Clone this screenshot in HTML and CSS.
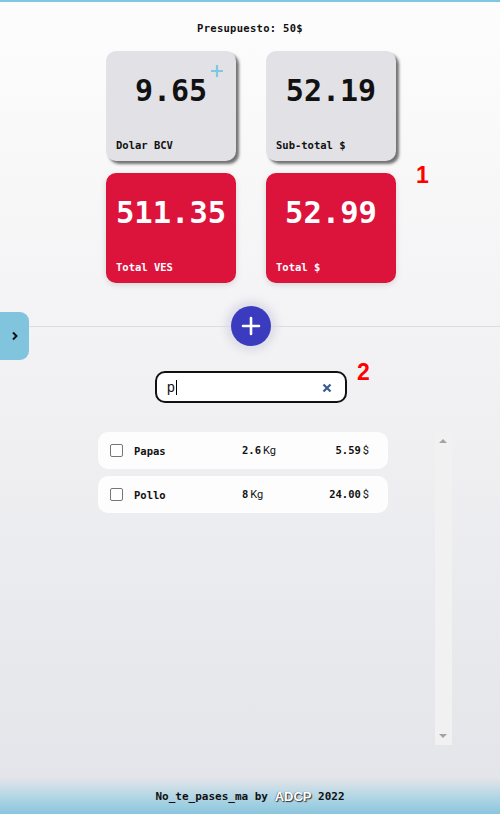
FILE: index.html
```html
<!DOCTYPE html>
<html lang="es">
<head>
<meta charset="utf-8">
<title>No_te_pases_ma</title>
<link rel="stylesheet" href="styles.css">
</head>
<body>
<div class="app">
  <header class="budget">Presupuesto: 50$</header>

  <section class="cards">
    <div class="card card-light">
      <span class="card-value">9.65</span>
      <span class="card-label">Dolar BCV</span>
      <svg class="card-plus" width="14" height="14" viewBox="0 0 14 14"><path d="M7 1v12M1 7h12" stroke="#7ec8e3" stroke-width="2.2" fill="none"/></svg>
    </div>
    <div class="card card-light">
      <span class="card-value">52.19</span>
      <span class="card-label">Sub-total $</span>
    </div>
    <div class="card card-red">
      <span class="card-value">511.35</span>
      <span class="card-label">Total VES</span>
    </div>
    <div class="card card-red">
      <span class="card-value">52.99</span>
      <span class="card-label">Total $</span>
    </div>
    <span class="marker marker-1">1</span>
  </section>

  <div class="divider">
    <button class="add-btn" type="button" aria-label="Agregar">
      <svg width="20" height="20" viewBox="0 0 20 20"><path d="M10 2v16M2 10h16" stroke="#fff" stroke-width="2.6" fill="none" stroke-linecap="round"/></svg>
    </button>
  </div>

  <div class="side-tab">
    <svg width="8" height="10" viewBox="0 0 8 10"><path d="M2 1.5L5.5 5L2 8.5" stroke="#111" stroke-width="2" fill="none"/></svg>
  </div>

  <div class="search-row">
    <div class="search">
      <span class="search-text">p</span><span class="caret"></span>
      <svg class="search-clear" width="10" height="10" viewBox="0 0 10 10"><path d="M1.5 1.5L8.5 8.5M8.5 1.5L1.5 8.5" stroke="#3a5a92" stroke-width="2.2" fill="none"/></svg>
      <span class="marker marker-2">2</span>
    </div>
  </div>

  <div class="list-area">
    <ul class="items">
      <li class="item">
        <span class="check"></span>
        <span class="item-name">Papas</span>
        <span class="item-qty">2.6<span class="unit">Kg</span></span>
        <span class="item-price">5.59<span class="unit">$</span></span>
      </li>
      <li class="item">
        <span class="check"></span>
        <span class="item-name">Pollo</span>
        <span class="item-qty">8<span class="unit">Kg</span></span>
        <span class="item-price">24.00<span class="unit">$</span></span>
      </li>
    </ul>
    <div class="scrollbar">
      <span class="arrow arrow-up"></span>
      <span class="arrow arrow-down"></span>
    </div>
  </div>

  <footer class="footer">No_te_pases_ma by <span class="brand">ADCP</span> 2022</footer>
</div>
</body>
</html>
```

FILE: styles.css
```css
* { box-sizing: border-box; }

html, body {
  margin: 0;
  padding: 0;
}

body {
  width: 500px;
  height: 814px;
  overflow: hidden;
  font-family: "DejaVu Sans Mono", "Liberation Mono", monospace;
  color: #111;
}

.app {
  position: relative;
  height: 814px;
  display: flex;
  flex-direction: column;
  border-top: 2px solid #7ec8e3;
  background: linear-gradient(180deg, #fdfdfd 0%, #f3f3f5 40%, #e3e4e9 100%);
}

.budget {
  margin-top: 19px;
  height: 14px;
  line-height: 14px;
  text-align: center;
  font-size: 10.5px;
  font-weight: bold;
  letter-spacing: 0.3px;
}

.cards {
  position: relative;
  align-self: center;
  margin-top: 16px;
  margin-left: 2px;
  display: grid;
  grid-template-columns: 130px 130px;
  grid-auto-rows: 110px;
  column-gap: 30px;
  row-gap: 12px;
}

.card {
  position: relative;
  border-radius: 10px;
  display: flex;
  flex-direction: column;
  justify-content: space-between;
  padding: 22px 10px 9px 10px;
}

.card-light {
  background: #e1e1e6;
  box-shadow: 3px 3px 3px rgba(0, 0, 0, 0.55);
}

.card-red {
  background: #dc143c;
  color: #fff;
  box-shadow: 0 2px 6px rgba(0, 0, 0, 0.12);
}

.card-value {
  display: block;
  text-align: center;
  font-size: 30px;
  line-height: 36px;
  font-weight: bold;
}

.card-red .card-value {
  font-size: 30.5px;
}

.card-label {
  display: block;
  font-size: 10.5px;
  line-height: 14px;
  font-weight: bold;
}

.card-plus {
  position: absolute;
  top: 13px;
  left: 104px;
}

.marker {
  position: absolute;
  font-family: "Liberation Sans", Arial, sans-serif;
  font-weight: bold;
  color: #f00;
  font-size: 23px;
  line-height: 23px;
}

.marker-1 {
  left: 310px;
  top: 113px;
}

.divider {
  margin-top: 23px;
  height: 40px;
  display: flex;
  justify-content: center;
  align-items: center;
  background: linear-gradient(#dcdce1, #dcdce1) center / 100% 1px no-repeat;
}

.add-btn {
  width: 40px;
  height: 40px;
  margin-left: 2px;
  border: none;
  border-radius: 50%;
  background: #3b3bbf;
  display: flex;
  align-items: center;
  justify-content: center;
  padding: 0;
  box-shadow: 0 0 6px 6px rgba(215, 215, 228, 0.7);
}

.side-tab {
  position: absolute;
  left: 0;
  top: 310px;
  width: 29px;
  height: 48px;
  background: #80c4de;
  border-radius: 0 9px 9px 0;
  display: flex;
  align-items: center;
  justify-content: center;
  padding-left: 1px;
}

.search-row {
  margin-top: 25px;
  display: flex;
  justify-content: center;
}

.search {
  position: relative;
  margin-left: 2px;
  width: 192px;
  height: 32px;
  border: 2px solid #111;
  border-radius: 10px;
  background: #fff;
  display: flex;
  align-items: center;
  padding-left: 10px;
  font-family: "Liberation Sans", Arial, sans-serif;
  font-size: 14px;
}

.search-text {
  color: #111;
}

.caret {
  width: 1px;
  height: 15px;
  background: #000;
  margin-left: 1px;
}

.search-clear {
  position: absolute;
  right: 13px;
  top: 10px;
}

.marker-2 {
  left: 200px;
  top: -12px;
}

.list-area {
  margin-top: 29px;
  margin-left: 98px;
  width: 354px;
  height: 313px;
  display: flex;
  justify-content: space-between;
}

.items {
  list-style: none;
  margin: 0;
  padding: 0;
  width: 290px;
  display: flex;
  flex-direction: column;
  gap: 7px;
}

.item {
  height: 37px;
  border-radius: 10px;
  background: #fdfdfd;
  display: flex;
  align-items: center;
  padding: 0 19px 0 12px;
  font-size: 10.5px;
  font-weight: bold;
}

.check {
  width: 13px;
  height: 13px;
  border: 1.5px solid #767676;
  border-radius: 2px;
  background: #fff;
  flex: none;
}

.item-name {
  margin-left: 11px;
  width: 108px;
}

.item-qty {
  width: 70px;
}

.item-price {
  flex: 1;
  text-align: right;
}

.unit {
  font-family: "Roboto", "Liberation Sans", sans-serif;
  font-weight: normal;
  font-size: 11px;
  margin-left: 2px;
}

.scrollbar {
  position: relative;
  width: 17px;
  height: 313px;
  background: #f1f1f1;
}

.arrow {
  position: absolute;
  left: 4px;
  width: 0;
  height: 0;
  border-left: 4px solid transparent;
  border-right: 4px solid transparent;
}

.arrow-up {
  top: 7px;
  border-bottom: 4px solid #a3a3a3;
}

.arrow-down {
  bottom: 7px;
  border-top: 4px solid #a3a3a3;
}

.footer {
  margin-top: auto;
  height: 36px;
  display: flex;
  align-items: center;
  justify-content: center;
  white-space: pre;
  font-size: 11px;
  font-weight: bold;
  background: linear-gradient(180deg, #e3e4e9 0%, #b9d8e5 45%, #8ac6de 100%);
}

.brand {
  font-family: "Liberation Sans", Arial, sans-serif;
  font-weight: bold;
  font-size: 13px;
  color: #fff;
  text-shadow: 1px 1px 1px #333, -0.5px 0 1px rgba(0,0,0,0.45);
}
```
